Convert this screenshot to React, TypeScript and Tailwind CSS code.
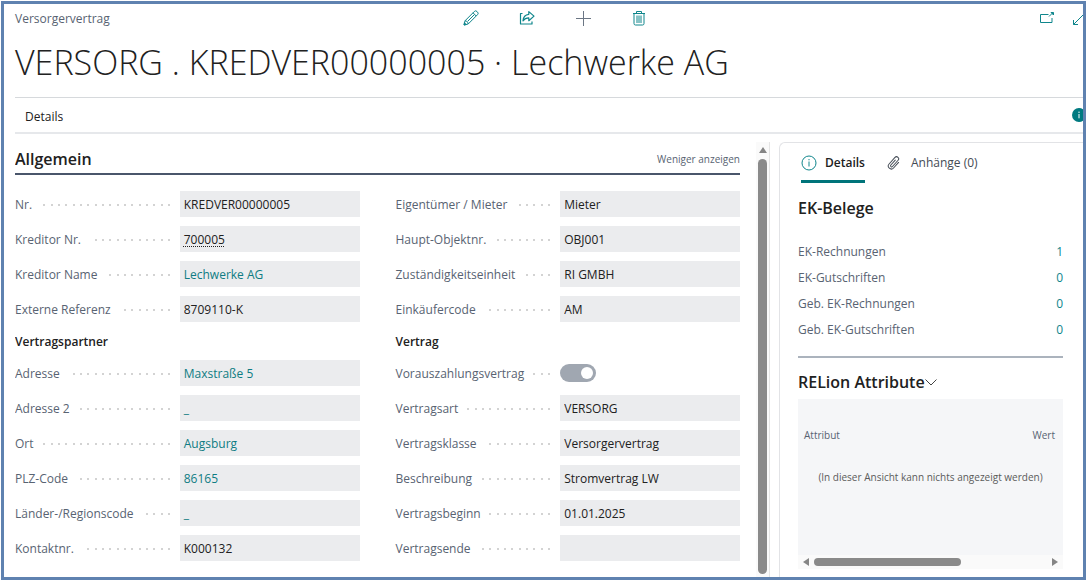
import React, { useId } from "react";

type FieldData = {
  label: string;
  value: string;
  kind?: "text" | "link" | "lookup" | "switch";
};

const general: FieldData[][] = [
  [
    { label: "Nr.", value: "KREDVER00000005" },
    { label: "Kreditor Nr.", value: "700005", kind: "lookup" },
    { label: "Kreditor Name", value: "Lechwerke AG", kind: "link" },
    { label: "Externe Referenz", value: "8709110-K" },
  ],
  [
    { label: "Eigentümer / Mieter", value: "Mieter" },
    { label: "Haupt-Objektnr.", value: "OBJ001" },
    { label: "Zuständigkeitseinheit", value: "RI GMBH" },
    { label: "Einkäufercode", value: "AM" },
  ],
];

const partner: FieldData[] = [
  { label: "Adresse", value: "Maxstraße 5", kind: "link" },
  { label: "Adresse 2", value: "_", kind: "link" },
  { label: "Ort", value: "Augsburg", kind: "link" },
  { label: "PLZ-Code", value: "86165", kind: "link" },
  { label: "Länder-/Regionscode", value: "_", kind: "link" },
  { label: "Kontaktnr.", value: "K000132" },
];

const contract: FieldData[] = [
  { label: "Vorauszahlungsvertrag", value: "", kind: "switch" },
  { label: "Vertragsart", value: "VERSORG" },
  { label: "Vertragsklasse", value: "Versorgervertrag" },
  { label: "Beschreibung", value: "Stromvertrag LW" },
  { label: "Vertragsbeginn", value: "01.01.2025" },
  { label: "Vertragsende", value: "" },
];

const documents = [
  { label: "EK-Rechnungen", count: 1 },
  { label: "EK-Gutschriften", count: 0 },
  { label: "Geb. EK-Rechnungen", count: 0 },
  { label: "Geb. EK-Gutschriften", count: 0 },
];

function Field({ label, value, kind = "text" }: FieldData) {
  const id = useId();
  return (
    <div className="grid h-[26px] grid-cols-[11fr_12fr] items-center">
      <div className="flex items-center gap-2 pt-[2px] pr-[10px]">
        <label htmlFor={id} className="shrink-0 text-[#586372]">
          {label}
        </label>
        <span className="h-[2px] flex-1 bg-[repeating-linear-gradient(to_left,#d3d3d3_0_2px,transparent_2px_7px,#d3d3d3_7px_9px,transparent_9px_15px,#d3d3d3_15px_17px,transparent_17px_22px)]" />
      </div>
      {kind === "text" && (
        <input
          id={id}
          readOnly
          defaultValue={value}
          className="h-full w-full min-w-0 bg-[#ebecee] px-1 text-[#212121] outline-none"
        />
      )}
      {kind === "link" && (
        <div className="flex h-full items-center bg-[#ebecee] px-1 pt-[2px]">
          <a id={id} href="#" className="text-[#0f7c83]">
            {value}
          </a>
        </div>
      )}
      {kind === "lookup" && (
        <div className="flex h-full items-center bg-[#ebecee] px-1 pt-[2px]">
          <a
            id={id}
            href="#"
            className="text-[#212121] underline decoration-dotted underline-offset-2"
          >
            {value}
          </a>
        </div>
      )}
      {kind === "switch" && (
        <input
          id={id}
          type="checkbox"
          role="switch"
          defaultChecked
          className="flex h-[18px] w-9 appearance-none items-center rounded-full bg-[#a0a7b1] px-[3px] before:size-[12px] before:rounded-full before:bg-white checked:justify-end"
        />
      )}
    </div>
  );
}

function FieldColumn({ fields }: { fields: FieldData[] }) {
  return (
    <div className="flex flex-col gap-[9px]">
      {fields.map((f) => (
        <Field key={f.label} {...f} />
      ))}
    </div>
  );
}

function PencilIcon() {
  return (
    <svg width="16" height="16" viewBox="0 0 16 16" fill="none" stroke="currentColor" strokeLinejoin="round">
      <path d="M1 15 2 10.8 11.3 1.5a1.9 1.9 0 0 1 2.7 0l.5.5a1.9 1.9 0 0 1 0 2.7L5.2 14Z" />
      <path d="m10 2.8 3.2 3.2M2 10.8c1.8.1 3 1.3 3.2 3.2M4.6 11.4l6.8-6.8" />
      <path d="m1 15 .5-2.2 1.7 1.7Z" fill="currentColor" />
    </svg>
  );
}

function ShareIcon() {
  return (
    <svg width="16" height="16" viewBox="0 0 16 16" fill="none" stroke="currentColor" strokeWidth="1.2" strokeLinejoin="round">
      <path d="M3.5 3.5h-2v10.500h11.500V11.500" />
      <path d="M9.800 1.600v2.700C6.300 4.600 4.300 6.800 4 10.800 5.500 8.700 7.400 7.900 9.800 7.900v2.800L15 6.100Z" />
    </svg>
  );
}

function PlusIcon() {
  return (
    <svg width="16" height="16" viewBox="0 0 16 16" fill="none" stroke="currentColor">
      <path d="M8.500 1v15M1 8.500h15" />
    </svg>
  );
}

function TrashIcon() {
  return (
    <svg width="16" height="16" viewBox="0 0 16 16" fill="none" stroke="currentColor">
      <path d="M2 3.500h12M5.500 3.500v-2h5v2M3 3.500v10a1.500 1.500 0 0 0 1.500 1.500h7a1.500 1.500 0 0 0 1.500-1.500v-10M6 5.500v7.500M8 5.500v7.500M10 5.500v7.500" />
    </svg>
  );
}

function PopOutIcon() {
  return (
    <svg width="16" height="16" viewBox="0 0 16 16" fill="none" stroke="currentColor">
      <path d="M9.500 4.500H1.500v8h11.500V8M10 6.500l3-3" />
      <path d="M12 2.500h2.500V5Z" fill="currentColor" />
    </svg>
  );
}

function ExpandIcon() {
  return (
    <svg width="16" height="16" viewBox="0 0 16 16" fill="none" stroke="currentColor">
      <path d="m.500 14.500 14-14M.500 10v4.500H5M10 .500h4.500V5" />
    </svg>
  );
}

function InfoIcon() {
  return (
    <svg width="16" height="16" viewBox="0 0 16 16" fill="none" stroke="currentColor">
      <circle cx="8" cy="8" r="7" />
      <path d="M8 6.500v5M8 4v1.300" />
    </svg>
  );
}

function InfoSolidIcon() {
  return (
    <svg width="14" height="14" viewBox="0 0 14 14">
      <circle cx="7" cy="7" r="7" fill="#007a80" />
      <path d="M7 6v4.300M7 3.600v1.400" stroke="#fff" />
    </svg>
  );
}

function ClipIcon() {
  return (
    <svg width="14" height="14" viewBox="0 0 14 14" fill="none" stroke="currentColor" strokeLinecap="round">
      <path
        transform="rotate(42 7 7)"
        d="M10 3.500V11a3 3 0 0 1-6 0V2.200a2.100 2.100 0 0 1 4.200 0V10.600a1.100 1.100 0 0 1-2.200 0V4"
      />
    </svg>
  );
}

function Triangle({ className }: { className: string }) {
  return (
    <svg width="8" height="6" viewBox="0 0 8 6" className={className}>
      <path d="M4 0 8 6H0Z" fill="#858585" />
    </svg>
  );
}

export default function App() {
  return (
    <div className="flex h-screen pt-px pl-px font-['Open_Sans','Noto_Sans',sans-serif] text-xs text-[#212121]">
      <div className="flex min-w-0 flex-1 flex-col overflow-hidden border-[3px] border-[#5f82b0] bg-white pl-[11px]">
        <header className="shrink-0">
          <div className="-mr-3 grid h-7 grid-cols-[1fr_auto_1fr] items-center">
            <span className="pt-[2px] text-[#586372]">Versorgervertrag</span>
            <div className="flex gap-10 text-[#0f868c]">
              <button aria-label="Bearbeiten"><PencilIcon /></button>
              <button aria-label="Teilen"><ShareIcon /></button>
              <button aria-label="Neu" className="text-[#6b7684]"><PlusIcon /></button>
              <button aria-label="Löschen"><TrashIcon /></button>
            </div>
            <div className="flex justify-end gap-[18px] pr-[6px] text-[#0f868c]">
              <button aria-label="In neuem Fenster öffnen"><PopOutIcon /></button>
              <button aria-label="Vergrößern"><ExpandIcon /></button>
            </div>
          </div>
          <h1 className="flex h-[65px] items-center pb-1 text-[34px] font-light whitespace-nowrap">
            VERSORG . KREDVER00000005 · Lechwerke AG
          </h1>
          <div className="flex h-[37px] items-center justify-between border-t border-b-2 border-t-[#d6d9dc] border-b-[#e6e8eb] pl-[10px]">
            <button className="pt-[3px]">Details</button>
            <button aria-label="Infobox umschalten" className="-mr-[3px]"><InfoSolidIcon /></button>
          </div>
        </header>

        <div className="flex min-h-0 flex-1">
          <main className="min-w-0 flex-1 overflow-hidden pr-4">
            <div className="flex h-[41px] items-center justify-between border-b-2 border-[#4a566b] pt-[10px]">
              <h2 className="text-base font-semibold">Allgemein</h2>
              <button className="pt-[3px] text-[10px] text-[#586372]">Weniger anzeigen</button>
            </div>
            <div className="grid grid-cols-2 gap-x-9 pt-4">
              <FieldColumn fields={general[0]} />
              <FieldColumn fields={general[1]} />
              <h3 className="flex h-[38px] items-center pt-[2px] font-semibold">Vertragspartner</h3>
              <h3 className="flex h-[38px] items-center pt-[2px] font-semibold">Vertrag</h3>
              <FieldColumn fields={partner} />
              <FieldColumn fields={contract} />
            </div>
          </main>

          <div className="mt-2 flex w-[14px] shrink-0 flex-col items-center gap-[6px] border-r border-[#e4e4e4] bg-[#fafafa] pt-[5px] pb-[3px]">
            <Triangle className="shrink-0" />
            <div className="w-[9px] flex-1 rounded-full bg-[#8a8a8a]" />
          </div>

          <aside className="mt-2 ml-[9px] flex w-[304px] shrink-0 flex-col rounded-tl-md border-t border-l border-[#e2e3e6] pr-5 pl-[18px]">
            <div className="flex h-10 gap-[22px] pl-[3px]">
              <button className="flex items-center gap-2 border-b-[3px] border-[#00747a] pt-[3px] font-semibold">
                <span className="text-[#0f868c]"><InfoIcon /></span>
                Details
              </button>
              <button className="flex items-center gap-[10px] pt-[3px] pb-[3px] text-[#444b55]">
                <ClipIcon />
                Anhänge (0)
              </button>
            </div>
            <h2 className="flex h-[56px] items-center pb-[6px] text-base font-semibold">EK-Belege</h2>
            <dl className="flex flex-col pb-[13px]">
              {documents.map((d) => (
                <div key={d.label} className="flex h-[26px] items-center justify-between">
                  <dt className="text-[#586372]">{d.label}</dt>
                  <dd><a href="#" className="text-[#0f868c]">{d.count}</a></dd>
                </div>
              ))}
            </dl>
            <button className="flex h-[43px] items-center border-t-2 border-[#abb3bd] pt-[7px] text-base font-semibold">
              RELion Attribute
              <svg width="12" height="7" viewBox="0 0 12 7" fill="none" stroke="#444">
                <path d="m.500.500 5.500 5.500L11.500.500" />
              </svg>
            </button>
            <div className="min-h-0 flex-1 bg-[#f5f6f8]">
              <table className="w-full text-[10px]">
                <thead className="text-[#586372]">
                  <tr className="h-14">
                    <th className="pt-[18px] pl-[6px] text-left font-normal">Attribut</th>
                    <th className="pt-[18px] pr-2 text-right font-normal">Wert</th>
                  </tr>
                </thead>
                <tbody>
                  <tr className="h-[46px]">
                    <td colSpan={2} className="text-center whitespace-nowrap text-[#5b5b5b]">
                      (In dieser Ansicht kann nichts angezeigt werden)
                    </td>
                  </tr>
                </tbody>
              </table>
            </div>
            <div className="mb-2 flex h-[14px] shrink-0 items-center bg-[#fafafa] px-1">
              <Triangle className="-rotate-90" />
              <div className="mx-1 flex-1">
                <div className="h-2 w-[63%] rounded-full bg-[#8a8a8a]" />
              </div>
              <Triangle className="rotate-90" />
            </div>
          </aside>
        </div>
      </div>
    </div>
  );
}
